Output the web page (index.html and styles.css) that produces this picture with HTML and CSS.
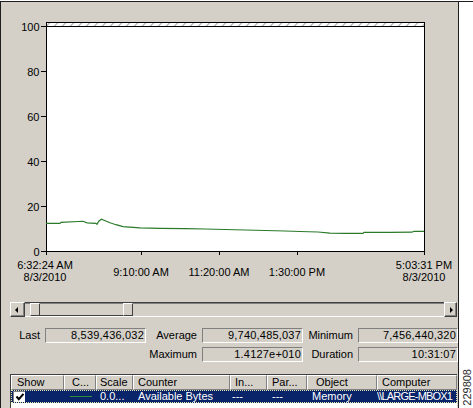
FILE: index.html
```html
<!DOCTYPE html>
<html>
<head>
<meta charset="utf-8">
<link rel="stylesheet" href="styles.css">
</head>
<body>
<div class="screen">
  <div class="frame">
    <svg class="chart" width="457" height="298" viewBox="1 2 457 298">
      <defs>
        <pattern id="hatch" x="46" y="23" width="8" height="3" patternUnits="userSpaceOnUse">
          <line x1="0.5" y1="3" x2="3.5" y2="0" stroke="#808080" stroke-width="1"/>
        </pattern>
      </defs>
      <rect x="46.5" y="22.5" width="378" height="4" fill="#fff"/>
      <rect x="46.5" y="22.5" width="378" height="4" fill="url(#hatch)" stroke="#000" stroke-width="1"/>
      <rect x="46.5" y="26.5" width="378" height="225" fill="#fff" stroke="#000" stroke-width="1"/>
      <g class="ticks" stroke="#000" stroke-width="1">
        <line x1="41" y1="26.5" x2="46" y2="26.5"/>
        <line x1="41" y1="71.5" x2="46" y2="71.5"/>
        <line x1="41" y1="116.5" x2="46" y2="116.5"/>
        <line x1="41" y1="161.5" x2="46" y2="161.5"/>
        <line x1="41" y1="206.5" x2="46" y2="206.5"/>
        <line x1="41" y1="251.5" x2="46" y2="251.5"/>
        <line x1="46.5" y1="251" x2="46.5" y2="255"/>
        <line x1="141.5" y1="251" x2="141.5" y2="255"/>
        <line x1="219.5" y1="251" x2="219.5" y2="255"/>
        <line x1="297.5" y1="251" x2="297.5" y2="255"/>
        <line x1="424.5" y1="251" x2="424.5" y2="255"/>
      </g>
      <g class="ylab">
        <text x="39.5" y="31">100</text>
        <text x="39.5" y="76">80</text>
        <text x="39.5" y="121">60</text>
        <text x="39.5" y="166">40</text>
        <text x="39.5" y="211">20</text>
        <text x="39.5" y="255.5">0</text>
      </g>
      <g class="xlab">
        <text x="45" y="268.5">6:32:24 AM</text>
        <text x="45" y="281">8/3/2010</text>
        <text x="141" y="276">9:10:00 AM</text>
        <text x="219" y="276">11:20:00 AM</text>
        <text x="297" y="276">1:30:00 PM</text>
        <text x="424" y="268.5">5:03:31 PM</text>
        <text x="424" y="281">8/3/2010</text>
      </g>
      <polyline fill="none" stroke="#2b7a2b" stroke-width="1.2" points="46,223.3 60,223.3 61,222.3 78,221.5 83,221.3 87,222.8 96,223.3 97,224.3 99,221 101.5,219.3 104,220.3 110,222.7 116,224.7 123,226.7 140,227.8 160,228.3 185,228.6 205,229 225,229.5 245,230 265,230.5 285,231 300,231.5 318,232 330,233.2 345,233.4 363,233.4 364,232.3 390,232.3 412,232.2 414,231.3 424,231.3"/>
    </svg>

    <div class="scroll">
      <div class="sbtn"><span class="arr-l"></span></div>
      <div class="track">
        <div class="thumb">
          <div class="handle"></div>
          <div class="tbody"></div>
          <div class="handle"></div>
        </div>
      </div>
      <div class="sbtn sbtn-r"><span class="arr-r"></span></div>
    </div>

    <div class="stats">
      <div class="lbl">Last</div>
      <div class="box">8,539,436,032</div>
      <div class="lbl">Average</div>
      <div class="box">9,740,485,037</div>
      <div class="lbl">Minimum</div>
      <div class="box">7,456,440,320</div>
      <div class="lbl col3">Maximum</div>
      <div class="box">1.4127e+010</div>
      <div class="lbl">Duration</div>
      <div class="box">10:31:07</div>
    </div>

    <div class="list">
      <div class="hdr">
        <div class="hc c1">Show</div>
        <div class="hc c2">C...</div>
        <div class="hc c3">Scale</div>
        <div class="hc c4">Counter</div>
        <div class="hc c5">In...</div>
        <div class="hc c6">Par...</div>
        <div class="hc c7">Object</div>
        <div class="hc c8">Computer</div>
      </div>
      <div class="row">
        <div class="rc c1"><span class="chk"><svg width="10" height="10" viewBox="0 0 10 10"><polyline points="1.5,4.5 3.8,7.2 8.5,1.8" fill="none" stroke="#000" stroke-width="2"/></svg></span></div>
        <div class="rc c2"><span class="legend"></span></div>
        <div class="rc c3">0.0...</div>
        <div class="rc c4">Available Bytes</div>
        <div class="rc c5">---</div>
        <div class="rc c6">---</div>
        <div class="rc c7">Memory</div>
        <div class="rc c8 comp">\\LARGE-MBOX1</div>
      </div>
    </div>
  </div>
  <div class="side">
    <span class="code">229808</span>
  </div>
</div>
</body>
</html>
```

FILE: styles.css
```css
* {
  box-sizing: border-box;
}

html,
body {
  margin: 0;
  padding: 0;
}

body {
  width: 473px;
  height: 408px;
  overflow: hidden;
  background: #fff;
  font-family: "Liberation Sans", Arial, sans-serif;
  font-size: 11px;
  color: #000;
}

.screen {
  display: flex;
  width: 473px;
  height: 408px;
  padding-top: 1px;
}

.frame {
  flex: none;
  width: 459px;
  height: 407px;
  background: #d4d0c8;
  border-top: 1px solid #1e1e1e;
  border-left: 1px solid #1e1e1e;
  border-right: 1px solid #1e1e1e;
  overflow: hidden;
  display: flex;
  flex-direction: column;
}

.side {
  flex: 1;
  border-top: 1px solid #1e1e1e;
  display: flex;
  flex-direction: column;
  justify-content: flex-end;
  align-items: center;
  padding-bottom: 2px;
  padding-left: 2px;
}

.code {
  writing-mode: vertical-rl;
  transform: rotate(180deg);
  font-size: 11px;
  line-height: 10px;
  color: #2a2a2a;
}

.chart {
  display: block;
  flex: none;
}

.chart text {
  font-family: "Liberation Sans", Arial, sans-serif;
  font-size: 11px;
  fill: #000;
}

.ylab text {
  text-anchor: end;
}

.xlab text {
  text-anchor: middle;
}

/* scrollbar / zoom slider */
.scroll {
  flex: none;
  display: flex;
  width: 447px;
  height: 15px;
  margin: 2px 0 0 9px;
}

.sbtn {
  flex: none;
  width: 15px;
  height: 15px;
  background: #d4d0c8;
  border-top: 1px solid #fff;
  border-left: 1px solid #fff;
  border-right: 1px solid #404040;
  border-bottom: 1px solid #404040;
  box-shadow: inset -1px -1px 0 #808080;
  display: flex;
  align-items: center;
  justify-content: center;
}

.sbtn-r {
  width: 13px;
}

.arr-l {
  width: 0;
  height: 0;
  border-top: 3px solid transparent;
  border-bottom: 3px solid transparent;
  border-right: 3px solid #000;
  margin-right: 2px;
}

.arr-r {
  width: 0;
  height: 0;
  border-top: 3px solid transparent;
  border-bottom: 3px solid transparent;
  border-left: 3px solid #000;
  margin-left: 1px;
}

.track {
  flex: 1;
  display: flex;
  padding-left: 5px;
  background: #d4d0c8;
  border-top: 1px solid #404040;
  border-bottom: 1px solid #fff;
  box-shadow: inset 0 1px 0 #808080;
}

.thumb {
  display: flex;
  width: 103px;
  height: 13px;
}

.handle {
  flex: none;
  width: 10px;
  height: 13px;
  background: #d4d0c8;
  border-top: 1px solid #fff;
  border-left: 1px solid #fff;
  border-right: 1px solid #404040;
  border-bottom: 1px solid #404040;
}

.tbody {
  flex: 1;
  border-top: 1px solid #808080;
  border-bottom: 1px solid #404040;
}

/* statistics */
.stats {
  flex: none;
  display: grid;
  grid-template-columns: 44px 101px 56px 101px 55px 100px;
  grid-auto-rows: 15px;
  row-gap: 4px;
  margin-top: 11px;
}

.lbl {
  text-align: right;
  padding-right: 5px;
  line-height: 15px;
  white-space: nowrap;
}

.col3 {
  grid-column-start: 3;
}

.box {
  border-top: 1px solid #808080;
  border-left: 1px solid #808080;
  border-bottom: 1px solid #fff;
  border-right: 1px solid #fff;
  text-align: right;
  padding-right: 1px;
  line-height: 13px;
  letter-spacing: 0.2px;
  white-space: nowrap;
}

/* counter list */
.list {
  flex: 1;
  width: 447px;
  margin: 12px 0 0 9px;
  background: #fff;
  border-top: 1px solid #404040;
  border-left: 1px solid #404040;
}

.hdr,
.row {
  display: flex;
}

.hc {
  flex: none;
  height: 15px;
  background: #d4d0c8;
  border-top: 1px solid #fff;
  border-left: 1px solid #fff;
  border-right: 1px solid #808080;
  border-bottom: 1px solid #808080;
  padding-left: 4px;
  line-height: 13px;
  white-space: nowrap;
  overflow: hidden;
}

.c1 { width: 53px; }
.c2 { width: 32px; }
.c3 { width: 37px; }
.c4 { width: 97px; }
.c5 { width: 37px; }
.c6 { width: 40px; }
.c7 { width: 70px; }
.c8 { width: 80px; }

.hc.c1 { padding-left: 5px; }
.hc.c2 { padding-left: 7px; }
.hc.c3 { padding-left: 3px; }
.hc.c7 { padding-left: 8px; }

.row {
  height: 13px;
  background: #0a246a;
  color: #fff;
  outline: 1px dotted #e8e8b0;
  outline-offset: -1px;
}

.rc {
  flex: none;
  height: 13px;
  line-height: 13px;
  white-space: nowrap;
  overflow: hidden;
  display: flex;
  align-items: center;
}

.rc.c1 { padding-left: 2px; }
.rc.c2 { padding-left: 6px; }
.rc.c3 { padding-left: 4px; }
.rc.c4 { padding-left: 5px; }
.rc.c5 { padding-left: 2px; }
.rc.c6 { padding-left: 5px; }
.rc.c7 { padding-left: 5px; }
.rc.c8 { padding-left: 0; }

.comp {
  letter-spacing: -0.8px;
}

.chk {
  display: flex;
  align-items: center;
  justify-content: center;
  width: 12px;
  height: 11px;
  background: #fff;
  border-top: 1px solid #808080;
  border-left: 1px solid #808080;
}

.legend {
  display: block;
  width: 22px;
  height: 1px;
  background: #2e8b3a;
}
```
